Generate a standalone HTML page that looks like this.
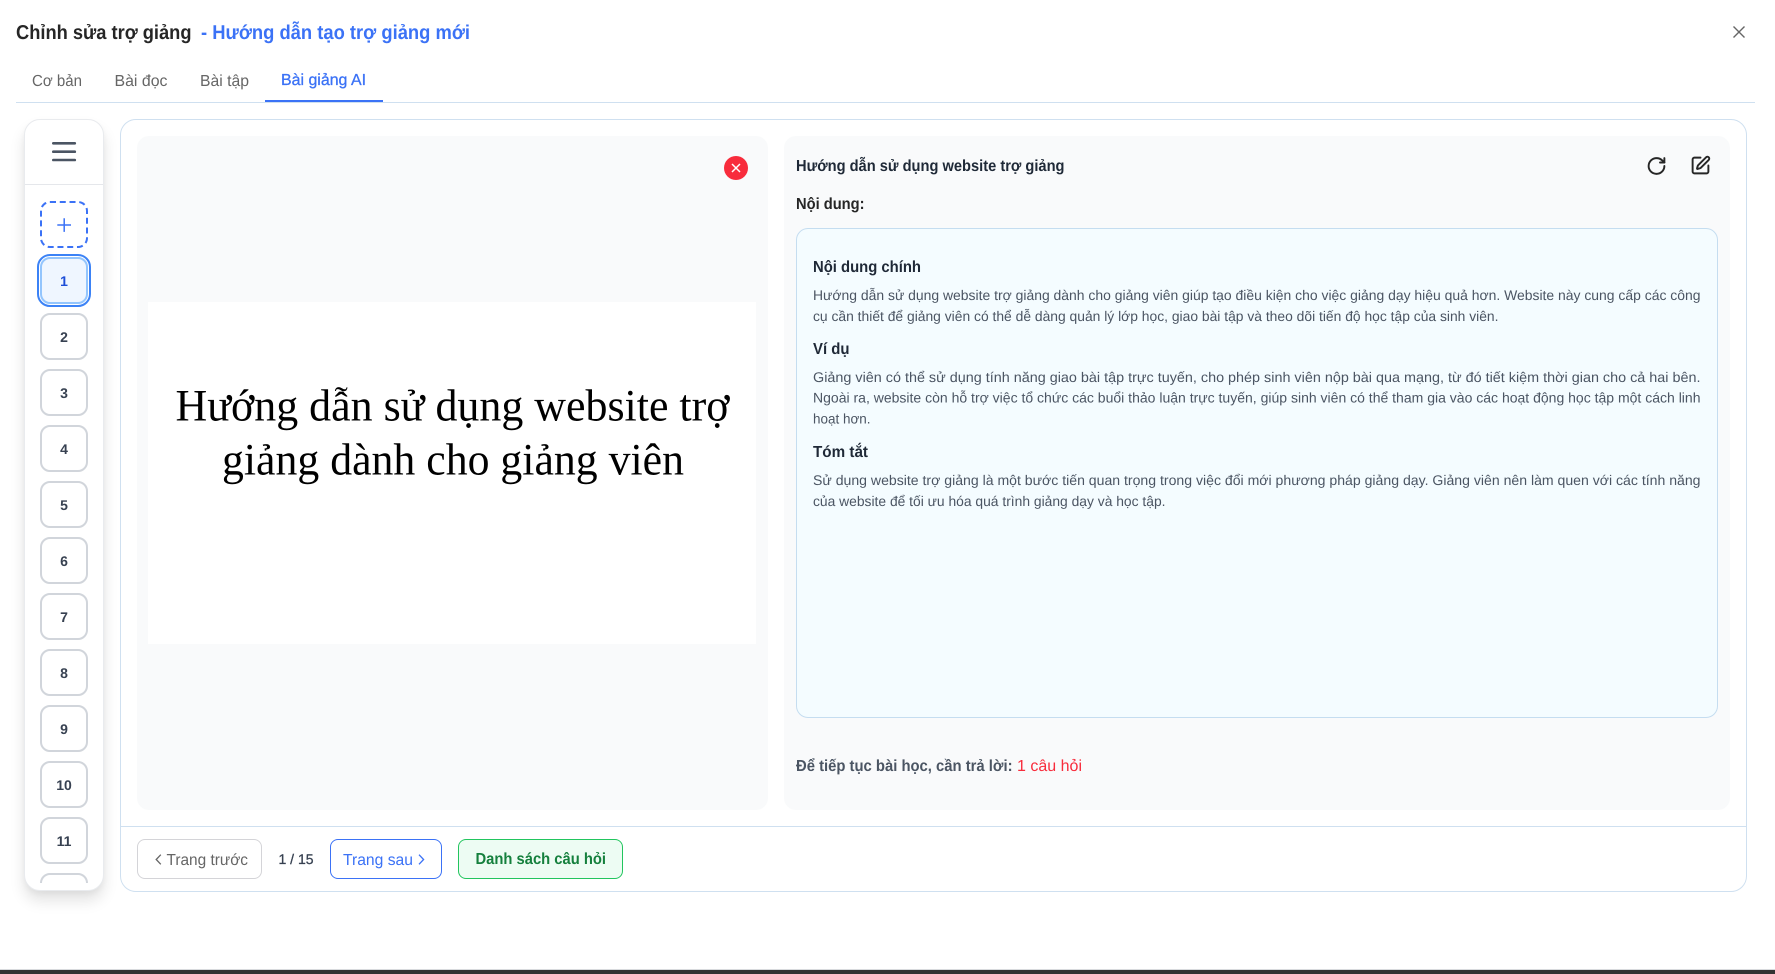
<!DOCTYPE html>
<html lang="vi"><head><meta charset="utf-8"><title>Chỉnh sửa trợ giảng</title>
<style>
html,body{margin:0;padding:0;width:1775px;height:974px;overflow:hidden;background:#fff}
div{position:absolute;box-sizing:border-box}
svg{position:absolute;left:0;top:0}
text{font-family:"Liberation Sans",sans-serif;text-rendering:geometricPrecision}
.n{left:40px;width:48px;height:47px;border:2px solid #d1d5db;border-radius:10px;background:#fff}
.p{font-size:14px;fill:#4b5563}
.h{font-size:16px;font-weight:700;fill:#1f2937}
.num{font-size:14px;font-weight:700;fill:#374151;text-anchor:middle}
.med{stroke-width:.3px}
</style></head><body>
<div style="left:16px;top:102px;width:1739px;height:1px;background:#cfe0f0"></div>
<div style="left:265px;top:100px;width:118px;height:2px;background:#3b72f6"></div>

<div style="left:24px;top:119px;width:80px;height:772px;border:1px solid #e9ebee;border-radius:16px;background:#fff;box-shadow:0 10px 15px rgba(0,0,0,.11),0 3px 6px rgba(0,0,0,.04);overflow:hidden">
  <div style="left:0;top:64px;width:78px;height:1px;background:#e5e7eb"></div>
</div>
<div style="left:40px;top:201px;width:48px;height:47px;border:2px dashed #3b72f6;border-radius:10px;background:#fff"></div>
<div style="left:37px;top:254px;width:54px;height:53px;border:2px solid #3b82f6;border-radius:13px;background:#fff"></div>
<div style="left:40px;top:257px;width:48px;height:47px;border:2px solid #93c5fd;border-radius:10px;background:#eff6ff"></div>
<div class="n" style="top:313px"></div><div class="n" style="top:369px"></div><div class="n" style="top:425px"></div>
<div class="n" style="top:481px"></div><div class="n" style="top:537px"></div><div class="n" style="top:593px"></div>
<div class="n" style="top:649px"></div><div class="n" style="top:705px"></div><div class="n" style="top:761px"></div>
<div class="n" style="top:817px"></div>
<div style="left:40px;top:873px;width:48px;height:10px;overflow:hidden"><div class="n" style="left:0;top:0"></div></div>

<div style="left:120px;top:119px;width:1627px;height:773px;border:1px solid #cfe0f0;border-radius:16px;background:#fff"></div>
<div style="left:137px;top:136px;width:631px;height:674px;border-radius:12px;background:#f9fafb"></div>
<div style="left:148px;top:302px;width:608px;height:342px;background:#fff"></div>
<div style="left:784px;top:136px;width:946px;height:674px;border-radius:12px;background:#f9fafb"></div>
<div style="left:796px;top:228px;width:922px;height:490px;border:1px solid #c5ddf0;border-radius:12px;background:#f4fcff"></div>
<div style="left:121px;top:826px;width:1625px;height:1px;background:#cfe0f0"></div>
<div style="left:137px;top:839px;width:125px;height:40px;border:1px solid #d4d4d8;border-radius:8px;background:#fff"></div>
<div style="left:330px;top:839px;width:112px;height:40px;border:1px solid #3b72f6;border-radius:8px;background:#fff"></div>
<div style="left:458px;top:839px;width:165px;height:40px;border:1px solid #22c55e;border-radius:8px;background:#edfcf3"></div>
<div style="left:0;top:969px;width:1775px;height:5px;background:#333;border-top:1px solid #d8dadd"></div>

<svg width="1775" height="974" viewBox="0 0 1775 974" xmlns="http://www.w3.org/2000/svg">
<text x="16" y="39" font-size="20" font-weight="700" fill="#262626" textLength="175.5" lengthAdjust="spacingAndGlyphs">Chỉnh sửa trợ giảng</text>
<text x="201" y="39" font-size="20" font-weight="700" fill="#3b72f6" textLength="269" lengthAdjust="spacingAndGlyphs">- Hướng dẫn tạo trợ giảng mới</text>
<g font-size="16" fill="#666">
<text x="32" y="86" textLength="50" lengthAdjust="spacingAndGlyphs">Cơ bản</text>
<text x="114.5" y="86" textLength="53" lengthAdjust="spacingAndGlyphs">Bài đọc</text>
<text x="200" y="86" textLength="49" lengthAdjust="spacingAndGlyphs">Bài tập</text>
</g>
<text class="med" x="281" y="85" font-size="16" fill="#3b72f6" stroke="#3b72f6" textLength="85" lengthAdjust="spacingAndGlyphs">Bài giảng AI</text>
<path d="M1733.5 26.5l11 11M1744.5 26.5l-11 11" stroke="#666" stroke-width="1.4" fill="none"/>

<path d="M53.3 143.3h21.5M53.3 151.7h21.5M53.3 160h21.5" stroke="#4b5563" stroke-width="2.6" stroke-linecap="round" fill="none"/>
<path d="M57.3 225h13.7M64.2 218.2v13.7" stroke="#3b72f6" stroke-width="1.5" fill="none"/>
<text class="num" x="64" y="286" style="fill:#1d4ed8">1</text>
<text class="num" x="64" y="342">2</text><text class="num" x="64" y="398">3</text><text class="num" x="64" y="454">4</text>
<text class="num" x="64" y="510">5</text><text class="num" x="64" y="566">6</text><text class="num" x="64" y="622">7</text>
<text class="num" x="64" y="678">8</text><text class="num" x="64" y="734">9</text><text class="num" x="64" y="790">10</text>
<text class="num" x="64" y="846">11</text>

<circle cx="736" cy="168" r="12" fill="#f82c3c"/>
<path d="M732 164l8 8M740 164l-8 8" stroke="#fff" stroke-width="1.5" fill="none"/>
<text x="175.5" y="420.5" font-size="45" fill="#000" style="font-family:'Liberation Serif',serif" textLength="554" lengthAdjust="spacingAndGlyphs">Hướng dẫn sử dụng website trợ</text>
<text x="222" y="474.5" font-size="45" fill="#000" style="font-family:'Liberation Serif',serif" textLength="462" lengthAdjust="spacingAndGlyphs">giảng dành cho giảng viên</text>

<text x="796" y="171" font-size="16" font-weight="700" fill="#1f2937" textLength="268.5" lengthAdjust="spacingAndGlyphs">Hướng dẫn sử dụng website trợ giảng</text>
<svg x="1646" y="155.5" width="21" height="21" viewBox="0 0 24 24" fill="none" stroke="#262626" stroke-width="2.2" stroke-linecap="round" stroke-linejoin="round"><path d="M21 12a9 9 0 1 1-9-9c2.52 0 4.93 1 6.74 2.74L21 8"/><path d="M21 3v5h-5"/></svg>
<svg x="1690" y="155" width="21" height="21" viewBox="0 0 24 24" fill="none" stroke="#262626" stroke-width="2.2" stroke-linecap="round" stroke-linejoin="round"><path d="M12 3H5a2 2 0 0 0-2 2v14a2 2 0 0 0 2 2h14a2 2 0 0 0 2-2v-7"/><path d="M18.375 2.625a1 1 0 0 1 3 3l-9.013 9.014a2 2 0 0 1-.853.505l-2.873.84a.5.5 0 0 1-.62-.62l.84-2.873a2 2 0 0 1 .506-.852z"/></svg>
<text x="796" y="209" font-size="16" font-weight="700" fill="#262626" textLength="68.5" lengthAdjust="spacingAndGlyphs">Nội dung:</text>

<text class="h" x="813" y="272" textLength="108" lengthAdjust="spacingAndGlyphs">Nội dung chính</text>
<text class="p" x="813" y="300" textLength="887.5" lengthAdjust="spacingAndGlyphs">Hướng dẫn sử dụng website trợ giảng dành cho giảng viên giúp tạo điều kiện cho việc giảng dạy hiệu quả hơn. Website này cung cấp các công</text>
<text class="p" x="813" y="321" textLength="685.5" lengthAdjust="spacingAndGlyphs">cụ cần thiết để giảng viên có thể dễ dàng quản lý lớp học, giao bài tập và theo dõi tiến độ học tập của sinh viên.</text>
<text class="h" x="813" y="354" textLength="36.5" lengthAdjust="spacingAndGlyphs">Ví dụ</text>
<text class="p" x="813" y="382" textLength="887.5" lengthAdjust="spacingAndGlyphs">Giảng viên có thể sử dụng tính năng giao bài tập trực tuyến, cho phép sinh viên nộp bài qua mạng, từ đó tiết kiệm thời gian cho cả hai bên.</text>
<text class="p" x="813" y="402.5" textLength="887.5" lengthAdjust="spacingAndGlyphs">Ngoài ra, website còn hỗ trợ việc tổ chức các buổi thảo luận trực tuyến, giúp sinh viên có thể tham gia vào các hoạt động học tập một cách linh</text>
<text class="p" x="813" y="423.5" textLength="57.5" lengthAdjust="spacingAndGlyphs">hoạt hơn.</text>
<text class="h" x="813" y="457" textLength="55" lengthAdjust="spacingAndGlyphs">Tóm tắt</text>
<text class="p" x="813" y="485" textLength="887.5" lengthAdjust="spacingAndGlyphs">Sử dụng website trợ giảng là một bước tiến quan trọng trong việc đổi mới phương pháp giảng dạy. Giảng viên nên làm quen với các tính năng</text>
<text class="p" x="813" y="506" textLength="352.5" lengthAdjust="spacingAndGlyphs">của website để tối ưu hóa quá trình giảng dạy và học tập.</text>

<text x="796" y="771" font-size="16" font-weight="700" fill="#4b5563" textLength="216.5" lengthAdjust="spacingAndGlyphs">Để tiếp tục bài học, cần trả lời:</text>
<text x="1017" y="771" font-size="16" fill="#f82c3c" textLength="65" lengthAdjust="spacingAndGlyphs">1 câu hỏi</text>

<path d="M160.8 854.7l-4.6 4.8 4.6 4.8" stroke="#666" stroke-width="1.3" fill="none"/>
<text x="166.5" y="865" font-size="16" fill="#666" textLength="81.5" lengthAdjust="spacingAndGlyphs">Trang trước</text>
<text class="med" x="278.5" y="864" font-size="14" fill="#374151" stroke="#374151" textLength="35" lengthAdjust="spacingAndGlyphs">1 / 15</text>
<text x="343" y="865" font-size="16" fill="#3b72f6" textLength="70" lengthAdjust="spacingAndGlyphs">Trang sau</text>
<path d="M419 854.7l4.6 4.8-4.6 4.8" stroke="#3b72f6" stroke-width="1.3" fill="none"/>
<text x="475.5" y="864" font-size="16" font-weight="700" fill="#15803d" textLength="130.5" lengthAdjust="spacingAndGlyphs">Danh sách câu hỏi</text>
</svg>
</body></html>
